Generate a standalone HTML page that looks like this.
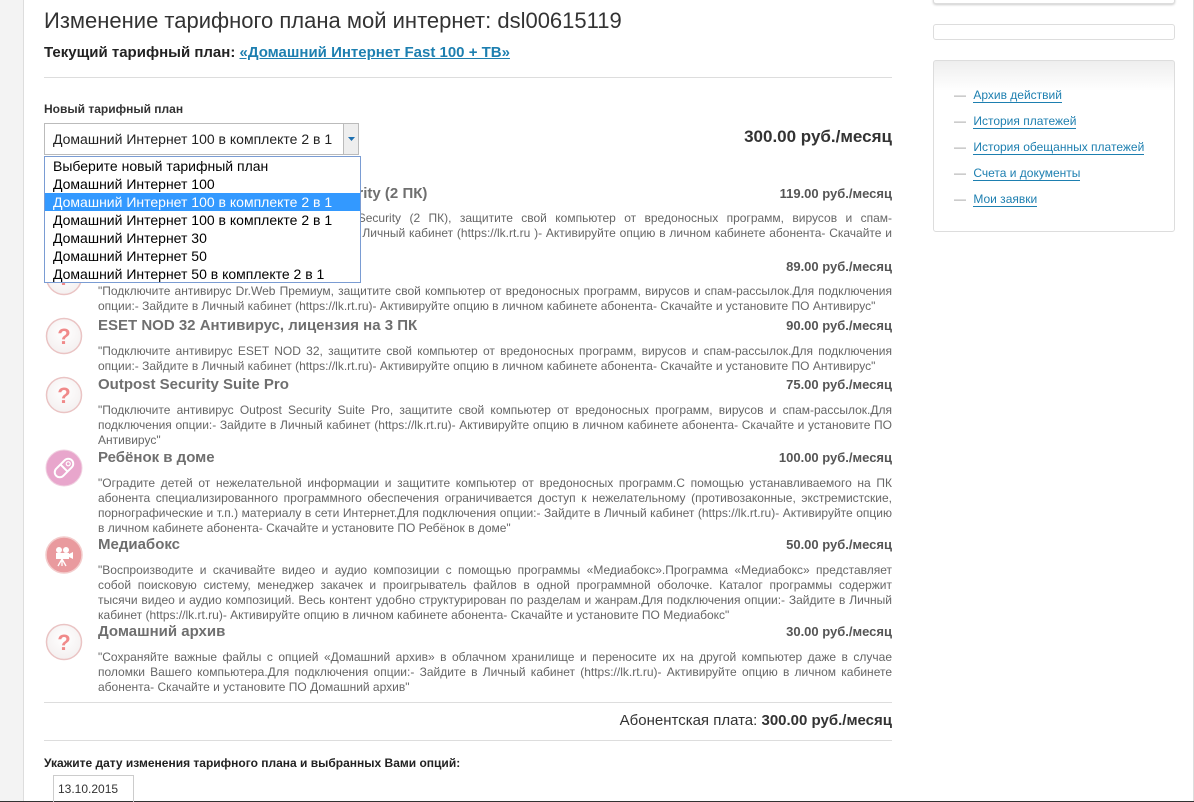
<!DOCTYPE html>
<html><head><meta charset="utf-8">
<style>
*{margin:0;padding:0;box-sizing:border-box}
body{width:1194px;height:802px;overflow:hidden;background:#f3f3f3;font-family:"Liberation Sans",Arial,sans-serif;position:relative}
.page{position:absolute;left:23px;top:0;width:1171px;height:801px;background:#fff;border-left:1px solid #ddd;border-right:1px solid #ddd}
.bottom{position:absolute;left:0;top:801px;width:1194px;height:1px;background:#333}
.a{position:absolute;white-space:nowrap}
h1{position:absolute;left:44px;top:8px;font-size:22px;font-weight:normal;color:#333;white-space:nowrap}
.hr{position:absolute;left:44px;width:848px;height:1px;background:#ddd}
.t{position:absolute;left:98px;font-size:15px;font-weight:bold;color:#6f6f6f;line-height:18px;white-space:nowrap}
.p{position:absolute;right:302px;font-size:13px;font-weight:bold;color:#555;line-height:18px;white-space:nowrap}
.d{position:absolute;left:98px;width:794px;font-size:12px;color:#666;line-height:15px}
.d div{text-align:justify;text-align-last:justify;white-space:nowrap;overflow:hidden}
.d div.l{text-align-last:left}
.ic{position:absolute;left:45px;width:38px;height:38px}
.side{position:absolute;left:933px;width:242px;border:1px solid #ddd;border-radius:3px;background:#fff}
.side ul{list-style:none;padding:0}
.side li{font-size:12px;line-height:26px;color:#999;padding-left:20px;white-space:nowrap}
.side li a{color:#1d7fb0;text-decoration:none;border-bottom:1px solid #1d7fb0;margin-left:4px}
.sel{position:absolute;left:44px;top:123px;width:315px;height:32px;border:1px solid #bbb;background:#fff;font-size:14px;color:#222;line-height:30px;padding-left:8px;white-space:nowrap}
.sel .btn{position:absolute;right:0;top:0;width:15px;height:30px;border-left:1px solid #bbb;background:#eee}
.dd{position:absolute;left:44px;top:156px;width:317px;height:127px;border:1px solid #7a9cd3;background:#fff;font-size:14px;color:#000}
.dd div{height:18px;line-height:18px;padding-left:8px;white-space:nowrap}
.dd .h{background:#3399ff;color:#fff}
</style></head><body>
<div class="page"></div>
<div class="bottom"></div>

<h1>Изменение тарифного плана мой интернет: dsl00615119</h1>
<div class="a" style="left:44px;top:44px;font-size:15px;font-weight:bold;color:#222">Текущий тарифный план: <span style="color:#1d7fb0;text-decoration:underline">«Домашний Интернет Fast 100 + ТВ»</span></div>
<div class="hr" style="top:77px"></div>
<div class="a" style="left:44px;top:102px;font-size:12px;font-weight:bold;color:#333">Новый тарифный план</div>
<div class="a" style="right:302px;top:127px;font-size:17px;font-weight:bold;color:#333">300.00 руб./месяц</div>

<!-- sidebar -->
<div class="side" style="top:-6px;height:10px;box-shadow:0 1px 2px #ccc"></div>
<div class="side" style="top:24px;height:16px"></div>
<div class="side" style="top:60px;height:172px;background:linear-gradient(#eee,#fff 30px)">
<ul style="margin-top:21px">
<li>— <a>Архив действий</a></li>
<li>— <a>История платежей</a></li>
<li>— <a>История обещанных платежей</a></li>
<li>— <a>Счета и документы</a></li>
<li>— <a>Мои заявки</a></li>
</ul></div>

<svg width="0" height="0" style="position:absolute"><defs>
<radialGradient id="gq" cx="50%" cy="40%" r="60%"><stop offset="0" stop-color="#fff"/><stop offset="1" stop-color="#f4f0f0"/></radialGradient>
</defs></svg>

<!-- rows -->
<div class="t" style="top:185px">Антивирус Kaspersky Internet Security (2 ПК)</div><div class="p" style="top:185px">119.00 руб./месяц</div>
<div class="d" style="top:211px"><div>"Подключите антивирус Kaspersky Internet Security (2 ПК), защитите свой компьютер от вредоносных программ, вирусов и спам-</div><div>рассылок.Для подключения опции:- Зайдите в Личный кабинет (https://lk.rt.ru )- Активируйте опцию в личном кабинете абонента- Скачайте и</div><div class="l">установите ПО Антивирус"</div></div>

<svg class="ic" style="top:258px" viewBox="0 0 38 38"><circle cx="19" cy="19" r="17.5" fill="url(#gq)" stroke="#eac4c4" stroke-width="1.5"/><text x="19" y="27" text-anchor="middle" font-family="Liberation Sans" font-weight="bold" font-size="22" fill="#f08a8a">?</text></svg>
<div class="t" style="top:258px">Антивирус Dr.Web Премиум</div><div class="p" style="top:258px">89.00 руб./месяц</div>
<div class="d" style="top:284px"><div>"Подключите антивирус Dr.Web Премиум, защитите свой компьютер от вредоносных программ, вирусов и спам-рассылок.Для подключения</div><div class="l">опции:- Зайдите в Личный кабинет (https://lk.rt.ru)- Активируйте опцию в личном кабинете абонента- Скачайте и установите ПО Антивирус"</div></div>

<svg class="ic" style="top:317px" viewBox="0 0 38 38"><circle cx="19" cy="19" r="17.5" fill="url(#gq)" stroke="#eac4c4" stroke-width="1.5"/><text x="19" y="27" text-anchor="middle" font-family="Liberation Sans" font-weight="bold" font-size="22" fill="#f08a8a">?</text></svg>
<div class="t" style="top:317px">ESET NOD 32 Антивирус, лицензия на 3 ПК</div><div class="p" style="top:317px">90.00 руб./месяц</div>
<div class="d" style="top:344px"><div>"Подключите антивирус ESET NOD 32, защитите свой компьютер от вредоносных программ, вирусов и спам-рассылок.Для подключения</div><div class="l">опции:- Зайдите в Личный кабинет (https://lk.rt.ru)- Активируйте опцию в личном кабинете абонента- Скачайте и установите ПО Антивирус"</div></div>

<svg class="ic" style="top:376px" viewBox="0 0 38 38"><circle cx="19" cy="19" r="17.5" fill="url(#gq)" stroke="#eac4c4" stroke-width="1.5"/><text x="19" y="27" text-anchor="middle" font-family="Liberation Sans" font-weight="bold" font-size="22" fill="#f08a8a">?</text></svg>
<div class="t" style="top:376px">Outpost Security Suite Pro</div><div class="p" style="top:376px">75.00 руб./месяц</div>
<div class="d" style="top:403px"><div>"Подключите антивирус Outpost Security Suite Pro, защитите свой компьютер от вредоносных программ, вирусов и спам-рассылок.Для</div><div>подключения опции:- Зайдите в Личный кабинет (https://lk.rt.ru)- Активируйте опцию в личном кабинете абонента- Скачайте и установите ПО</div><div class="l">Антивирус"</div></div>

<svg class="ic" style="top:449px" viewBox="0 0 38 38"><circle cx="19" cy="19" r="18" fill="#e8a6cc" stroke="#f0d0e0" stroke-width="1"/><g transform="rotate(-45 19 19)"><rect x="8" y="14" width="22" height="10" rx="5" fill="none" stroke="#fff" stroke-width="2"/><line x1="19" y1="14" x2="19" y2="24" stroke="#fff" stroke-width="2"/><circle cx="25" cy="19" r="2" fill="none" stroke="#fff" stroke-width="1.2"/></g></svg>
<div class="t" style="top:449px">Ребёнок в доме</div><div class="p" style="top:449px">100.00 руб./месяц</div>
<div class="d" style="top:476px"><div>"Оградите детей от нежелательной информации и защитите компьютер от вредоносных программ.С помощью устанавливаемого на ПК</div><div>абонента специализированного программного обеспечения ограничивается доступ к нежелательному (противозаконные, экстремистские,</div><div>порнографические и т.п.) материалу в сети Интернет.Для подключения опции:- Зайдите в Личный кабинет (https://lk.rt.ru)- Активируйте опцию</div><div class="l">в личном кабинете абонента- Скачайте и установите ПО Ребёнок в доме"</div></div>

<svg class="ic" style="top:536px" viewBox="0 0 38 38"><circle cx="19" cy="19" r="18" fill="#e99a9e" stroke="#f3cccc" stroke-width="1.5"/><circle cx="14" cy="14" r="3" fill="#fff"/><circle cx="21" cy="14" r="3" fill="#fff"/><rect x="11" y="17" width="13" height="6" fill="#fff"/><path d="M24 18 L28 16 L28 23 L24 21Z" fill="#fff"/><path d="M17 23 L13 30 M17 23 L17 30 M17 23 L21 30" stroke="#fff" stroke-width="1.3"/></svg>
<div class="t" style="top:536px">Медиабокс</div><div class="p" style="top:536px">50.00 руб./месяц</div>
<div class="d" style="top:563px"><div>"Воспроизводите и скачивайте видео и аудио композиции с помощью программы «Медиабокс».Программа «Медиабокс» представляет</div><div>собой поисковую систему, менеджер закачек и проигрыватель файлов в одной программной оболочке. Каталог программы содержит</div><div>тысячи видео и аудио композиций. Весь контент удобно структурирован по разделам и жанрам.Для подключения опции:- Зайдите в Личный</div><div class="l">кабинет (https://lk.rt.ru)- Активируйте опцию в личном кабинете абонента- Скачайте и установите ПО Медиабокс"</div></div>

<svg class="ic" style="top:623px" viewBox="0 0 38 38"><circle cx="19" cy="19" r="17.5" fill="url(#gq)" stroke="#eac4c4" stroke-width="1.5"/><text x="19" y="27" text-anchor="middle" font-family="Liberation Sans" font-weight="bold" font-size="22" fill="#f08a8a">?</text></svg>
<div class="t" style="top:623px">Домашний архив</div><div class="p" style="top:623px">30.00 руб./месяц</div>
<div class="d" style="top:650px"><div>"Сохраняйте важные файлы с опцией «Домашний архив» в облачном хранилище и переносите их на другой компьютер даже в случае</div><div>поломки Вашего компьютера.Для подключения опции:- Зайдите в Личный кабинет (https://lk.rt.ru)- Активируйте опцию в личном кабинете</div><div class="l">абонента- Скачайте и установите ПО Домашний архив"</div></div>

<div class="hr" style="top:702px"></div>
<div class="a" style="right:302px;top:712px;font-size:15px;color:#333">Абонентская плата: <b>300.00 руб./месяц</b></div>
<div class="hr" style="top:740px"></div>
<div class="a" style="left:44px;top:756px;font-size:12px;font-weight:bold;color:#222">Укажите дату изменения тарифного плана и выбранных Вами опций:</div>
<div class="a" style="left:53px;top:775px;width:81px;height:27px;border:1px solid #ccc;border-bottom:none;font-size:12px;color:#333;padding:6px 0 0 4px">13.10.2015</div>

<!-- select + dropdown -->
<svg class="ic" style="top:185px" viewBox="0 0 38 38"><circle cx="19" cy="19" r="17.5" fill="url(#gq)" stroke="#eac4c4" stroke-width="1.5"/></svg>
<div class="sel">Домашний Интернет 100 в комплекте 2 в 1<div class="btn"><svg width="15" height="30"><path d="M4 13 L11 13 L7.5 17Z" fill="#1d6fb0"/></svg></div></div>
<div class="dd">
<div>Выберите новый тарифный план</div>
<div>Домашний Интернет 100</div>
<div class="h">Домашний Интернет 100 в комплекте 2 в 1</div>
<div>Домашний Интернет 100 в комплекте 2 в 1</div>
<div>Домашний Интернет 30</div>
<div>Домашний Интернет 50</div>
<div>Домашний Интернет 50 в комплекте 2 в 1</div>
</div>
</body></html>
